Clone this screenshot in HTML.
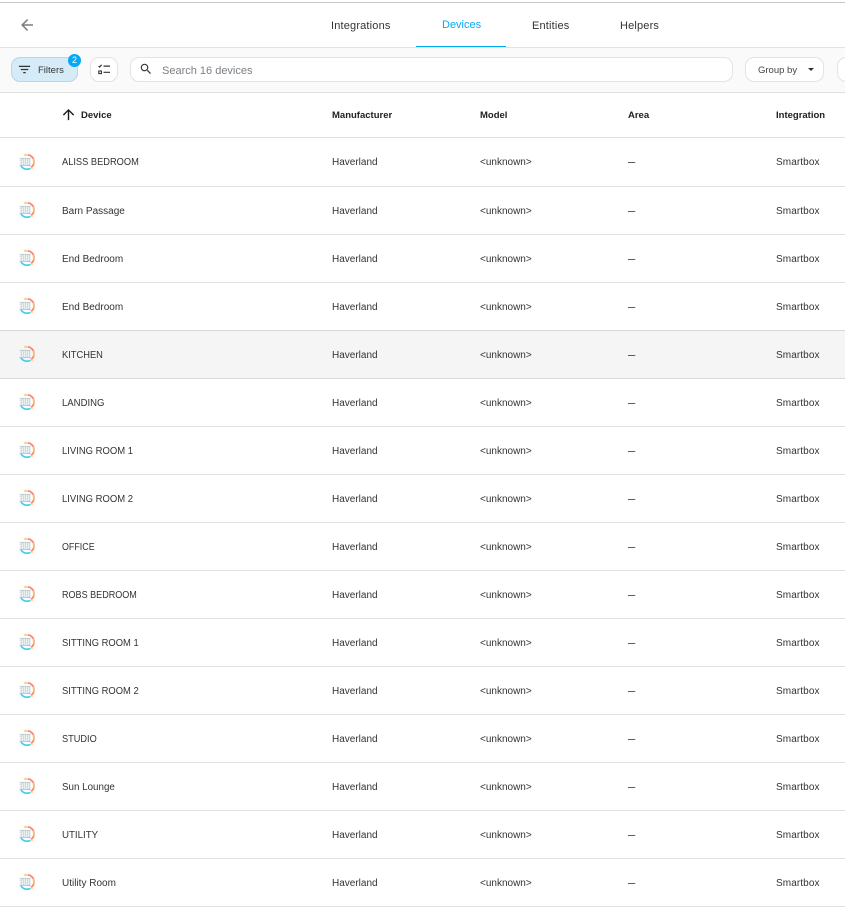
<!DOCTYPE html>
<html><head><meta charset="utf-8"><style>
*{box-sizing:border-box}
html,body{margin:0;padding:0}
body{width:845px;height:910px;overflow:hidden;background:#fff;position:relative;font-family:"Liberation Sans",sans-serif;color:#212121}
.a{position:absolute}
.t{position:absolute;white-space:nowrap;line-height:14px;font-size:10px;color:#333}
.line{position:absolute;left:0;width:845px;height:1px;background:#e0e0e0}
.h{font-weight:bold;font-size:9.5px;color:#212121}
.tab{font-size:11px;color:#333;letter-spacing:.17px}
.btn{position:absolute;background:#fff;border:1px solid #e3e3e3;border-radius:9px}
.r{position:absolute;left:0;width:845px;height:14px}
.r .t{top:0}
.r svg{position:absolute;left:18px;top:-4px}
.m{left:332px}.r .d{left:628px;top:-1px;font-size:13px;color:#444}.o{left:480px}.s{left:776px;letter-spacing:.1px}.n{left:62px;transform-origin:left center}
</style></head><body>
<svg width="0" height="0" style="position:absolute"><defs>
<symbol id="ic" viewBox="0 0 18 18">
<path d="M9.500 1.800A7 7 0 0 1 13 14.600" fill="none" stroke="#f5826e" stroke-width="1.700"/>
<path d="M15.300 6A7 7 0 0 1 15.500 11" fill="none" stroke="#f9c07a" stroke-width="1.700"/>
<path d="M12.500 15.300A7 7 0 0 1 2.800 12.500" fill="none" stroke="#4fc6e6" stroke-width="1.700"/>
<circle cx="7.500" cy="1.900" r="1.300" fill="#f9cf70"/>
<circle cx="14" cy="15.200" r="1" fill="#f7dc82"/>
<rect x="1.500" y="5" width="11.500" height="7.800" rx="1" fill="#eaf1f4"/>
<path d="M3.500 5v7.800M5.500 5v7.800M7.500 5v7.800M9.500 5v7.800M11.500 5v7.800" stroke="#c5d2d8" stroke-width=".7"/>
<path d="M1.500 5.300h11.500" stroke="#b2c0c6" stroke-width=".7"/>
<path d="M1.500 12.600h11.500" stroke="#8fd2e2" stroke-width=".8"/>
</symbol></defs></svg>

<div class="a" style="left:0;top:2px;width:845px;height:1px;background:#c8c8c8"></div>
<svg class="a" style="left:18px;top:16px" width="18" height="18" viewBox="0 0 24 24"><path d="M20 11v2H8l5.500 5.500-1.420 1.420L4.160 12l7.920-7.920L13.500 5.500 8 11h12z" fill="#7d7d7d"/></svg>
<div class="t tab" style="left:331px;top:19px">Integrations</div>
<div class="t tab" style="left:442px;top:18px;color:#03a9f4;letter-spacing:0">Devices</div>
<div class="t tab" style="left:532px;top:19px">Entities</div>
<div class="t tab" style="left:620px;top:19px">Helpers</div>
<div class="a" style="left:416px;top:46px;width:90px;height:1px;background:#03a9f4"></div>
<div class="a" style="left:0;top:47px;width:845px;height:46px;background:#fafafa;border-top:1px solid #e2e2e2;border-bottom:1px solid #e0e0e0"></div>

<div class="a" style="left:11px;top:57px;width:67px;height:25px;background:#d5ebf8;border:1px solid #b9d5e6;border-radius:9px"></div>
<svg class="a" style="left:17px;top:62px" width="15" height="15" viewBox="0 0 24 24"><path d="M6 13h12v-2H6M3 6v2h18V6M10 18h4v-2h-4v2z" fill="#333"/></svg>
<div class="t" style="left:38px;top:64px;font-size:9.500px;color:#333">Filters</div>
<div class="a" style="left:68px;top:54px;width:13px;height:13px;border-radius:50%;background:#03a9f4;color:#fff;font-size:9px;line-height:13px;text-align:center">2</div>
<div class="btn" style="left:90px;top:57px;width:28px;height:25px"></div>
<svg class="a" style="left:98px;top:64px" width="12" height="11" viewBox="0 0 12 11"><path d="M.6 2l1 1 2-2.200" fill="none" stroke="#333" stroke-width="1.200"/><rect x=".8" y="7" width="2.600" height="2.600" fill="none" stroke="#333" stroke-width="1.100"/><path d="M5.500 2.100h6.500M5.500 8.300h6.500" stroke="#333" stroke-width="1.200"/></svg>
<div class="btn" style="left:130px;top:57px;width:603px;height:25px"></div>
<svg class="a" style="left:139px;top:62px" width="14" height="14" viewBox="0 0 24 24"><path d="M9.500 3A6.500 6.500 0 0 1 16 9.500c0 1.610-.590 3.090-1.560 4.230l.270.270h.790l5 5-1.500 1.500-5-5v-.790l-.270-.270A6.520 6.520 0 0 1 9.500 16 6.500 6.500 0 0 1 3 9.500 6.500 6.500 0 0 1 9.500 3m0 2C7 5 5 7 5 9.500S7 14 9.500 14 14 12 14 9.500 12 5 9.500 5z" fill="#333"/></svg>
<div class="t" style="left:162px;top:64px;font-size:11px;color:#7a7f85">Search 16 devices</div>
<div class="btn" style="left:745px;top:57px;width:79px;height:25px"></div>
<div class="t" style="left:758px;top:64px;font-size:9.500px;color:#444">Group by</div>
<div class="a" style="left:808px;top:68px;width:0;height:0;border-left:3px solid transparent;border-right:3px solid transparent;border-top:3px solid #333"></div>
<div class="btn" style="left:837px;top:57px;width:30px;height:25px"></div>

<svg class="a" style="left:60px;top:106px" width="17" height="17" viewBox="0 0 24 24"><path d="M13 20h-2V8l-5.500 5.500-1.420-1.420L12 4.160l7.920 7.920-1.420 1.420L13 8v12z" fill="#212121"/></svg>
<div class="t h" style="left:81px;top:109px">Device</div>
<div class="t h" style="left:332px;top:109px">Manufacturer</div>
<div class="t h" style="left:480px;top:109px">Model</div>
<div class="t h" style="left:628px;top:109px">Area</div>
<div class="t h" style="left:776px;top:109px">Integration</div>
<div class="line" style="top:137px"></div>

<div class="a" style="left:0;top:331px;width:845px;height:47px;background:#f5f5f5"></div>

<div class="line" style="top:186px"></div><div class="line" style="top:234px"></div><div class="line" style="top:282px"></div><div class="line" style="top:330px;background:#d8d8d8"></div><div class="line" style="top:378px;background:#d8d8d8"></div><div class="line" style="top:426px"></div><div class="line" style="top:474px"></div><div class="line" style="top:522px"></div><div class="line" style="top:570px"></div><div class="line" style="top:618px"></div><div class="line" style="top:666px"></div><div class="line" style="top:714px"></div><div class="line" style="top:762px"></div><div class="line" style="top:810px"></div><div class="line" style="top:858px"></div><div class="line" style="top:906px"></div>

<div class="r" style="top:156px"><svg width="18" height="18" style="top:-3px"><use href="#ic"/></svg><div class="t n" style="transform:scaleX(.928)">ALISS BEDROOM</div><div class="t m">Haverland</div><div class="t o">&lt;unknown&gt;</div><div class="t d">–</div><div class="t s">Smartbox</div></div>
<div class="r" style="top:205px"><svg width="18" height="18"><use href="#ic"/></svg><div class="t n">Barn Passage</div><div class="t m">Haverland</div><div class="t o">&lt;unknown&gt;</div><div class="t d">–</div><div class="t s">Smartbox</div></div>
<div class="r" style="top:253px"><svg width="18" height="18"><use href="#ic"/></svg><div class="t n">End Bedroom</div><div class="t m">Haverland</div><div class="t o">&lt;unknown&gt;</div><div class="t d">–</div><div class="t s">Smartbox</div></div>
<div class="r" style="top:301px"><svg width="18" height="18"><use href="#ic"/></svg><div class="t n">End Bedroom</div><div class="t m">Haverland</div><div class="t o">&lt;unknown&gt;</div><div class="t d">–</div><div class="t s">Smartbox</div></div>
<div class="r" style="top:349px"><svg width="18" height="18"><use href="#ic"/></svg><div class="t n" style="transform:scaleX(.932)">KITCHEN</div><div class="t m">Haverland</div><div class="t o">&lt;unknown&gt;</div><div class="t d">–</div><div class="t s">Smartbox</div></div>
<div class="r" style="top:397px"><svg width="18" height="18"><use href="#ic"/></svg><div class="t n" style="transform:scaleX(.955)">LANDING</div><div class="t m">Haverland</div><div class="t o">&lt;unknown&gt;</div><div class="t d">–</div><div class="t s">Smartbox</div></div>
<div class="r" style="top:445px"><svg width="18" height="18"><use href="#ic"/></svg><div class="t n" style="transform:scaleX(.947)">LIVING ROOM 1</div><div class="t m">Haverland</div><div class="t o">&lt;unknown&gt;</div><div class="t d">–</div><div class="t s">Smartbox</div></div>
<div class="r" style="top:493px"><svg width="18" height="18"><use href="#ic"/></svg><div class="t n" style="transform:scaleX(.947)">LIVING ROOM 2</div><div class="t m">Haverland</div><div class="t o">&lt;unknown&gt;</div><div class="t d">–</div><div class="t s">Smartbox</div></div>
<div class="r" style="top:541px"><svg width="18" height="18"><use href="#ic"/></svg><div class="t n" style="transform:scaleX(.89)">OFFICE</div><div class="t m">Haverland</div><div class="t o">&lt;unknown&gt;</div><div class="t d">–</div><div class="t s">Smartbox</div></div>
<div class="r" style="top:589px"><svg width="18" height="18"><use href="#ic"/></svg><div class="t n" style="transform:scaleX(.904)">ROBS BEDROOM</div><div class="t m">Haverland</div><div class="t o">&lt;unknown&gt;</div><div class="t d">–</div><div class="t s">Smartbox</div></div>
<div class="r" style="top:637px"><svg width="18" height="18"><use href="#ic"/></svg><div class="t n" style="transform:scaleX(.939)">SITTING ROOM 1</div><div class="t m">Haverland</div><div class="t o">&lt;unknown&gt;</div><div class="t d">–</div><div class="t s">Smartbox</div></div>
<div class="r" style="top:685px"><svg width="18" height="18"><use href="#ic"/></svg><div class="t n" style="transform:scaleX(.939)">SITTING ROOM 2</div><div class="t m">Haverland</div><div class="t o">&lt;unknown&gt;</div><div class="t d">–</div><div class="t s">Smartbox</div></div>
<div class="r" style="top:733px"><svg width="18" height="18"><use href="#ic"/></svg><div class="t n" style="transform:scaleX(.92)">STUDIO</div><div class="t m">Haverland</div><div class="t o">&lt;unknown&gt;</div><div class="t d">–</div><div class="t s">Smartbox</div></div>
<div class="r" style="top:781px"><svg width="18" height="18"><use href="#ic"/></svg><div class="t n" style="transform:scaleX(.98)">Sun Lounge</div><div class="t m">Haverland</div><div class="t o">&lt;unknown&gt;</div><div class="t d">–</div><div class="t s">Smartbox</div></div>
<div class="r" style="top:829px"><svg width="18" height="18"><use href="#ic"/></svg><div class="t n" style="transform:scaleX(.97)">UTILITY</div><div class="t m">Haverland</div><div class="t o">&lt;unknown&gt;</div><div class="t d">–</div><div class="t s">Smartbox</div></div>
<div class="r" style="top:877px"><svg width="18" height="18"><use href="#ic"/></svg><div class="t n">Utility Room</div><div class="t m">Haverland</div><div class="t o">&lt;unknown&gt;</div><div class="t d">–</div><div class="t s">Smartbox</div></div>
</body></html>
